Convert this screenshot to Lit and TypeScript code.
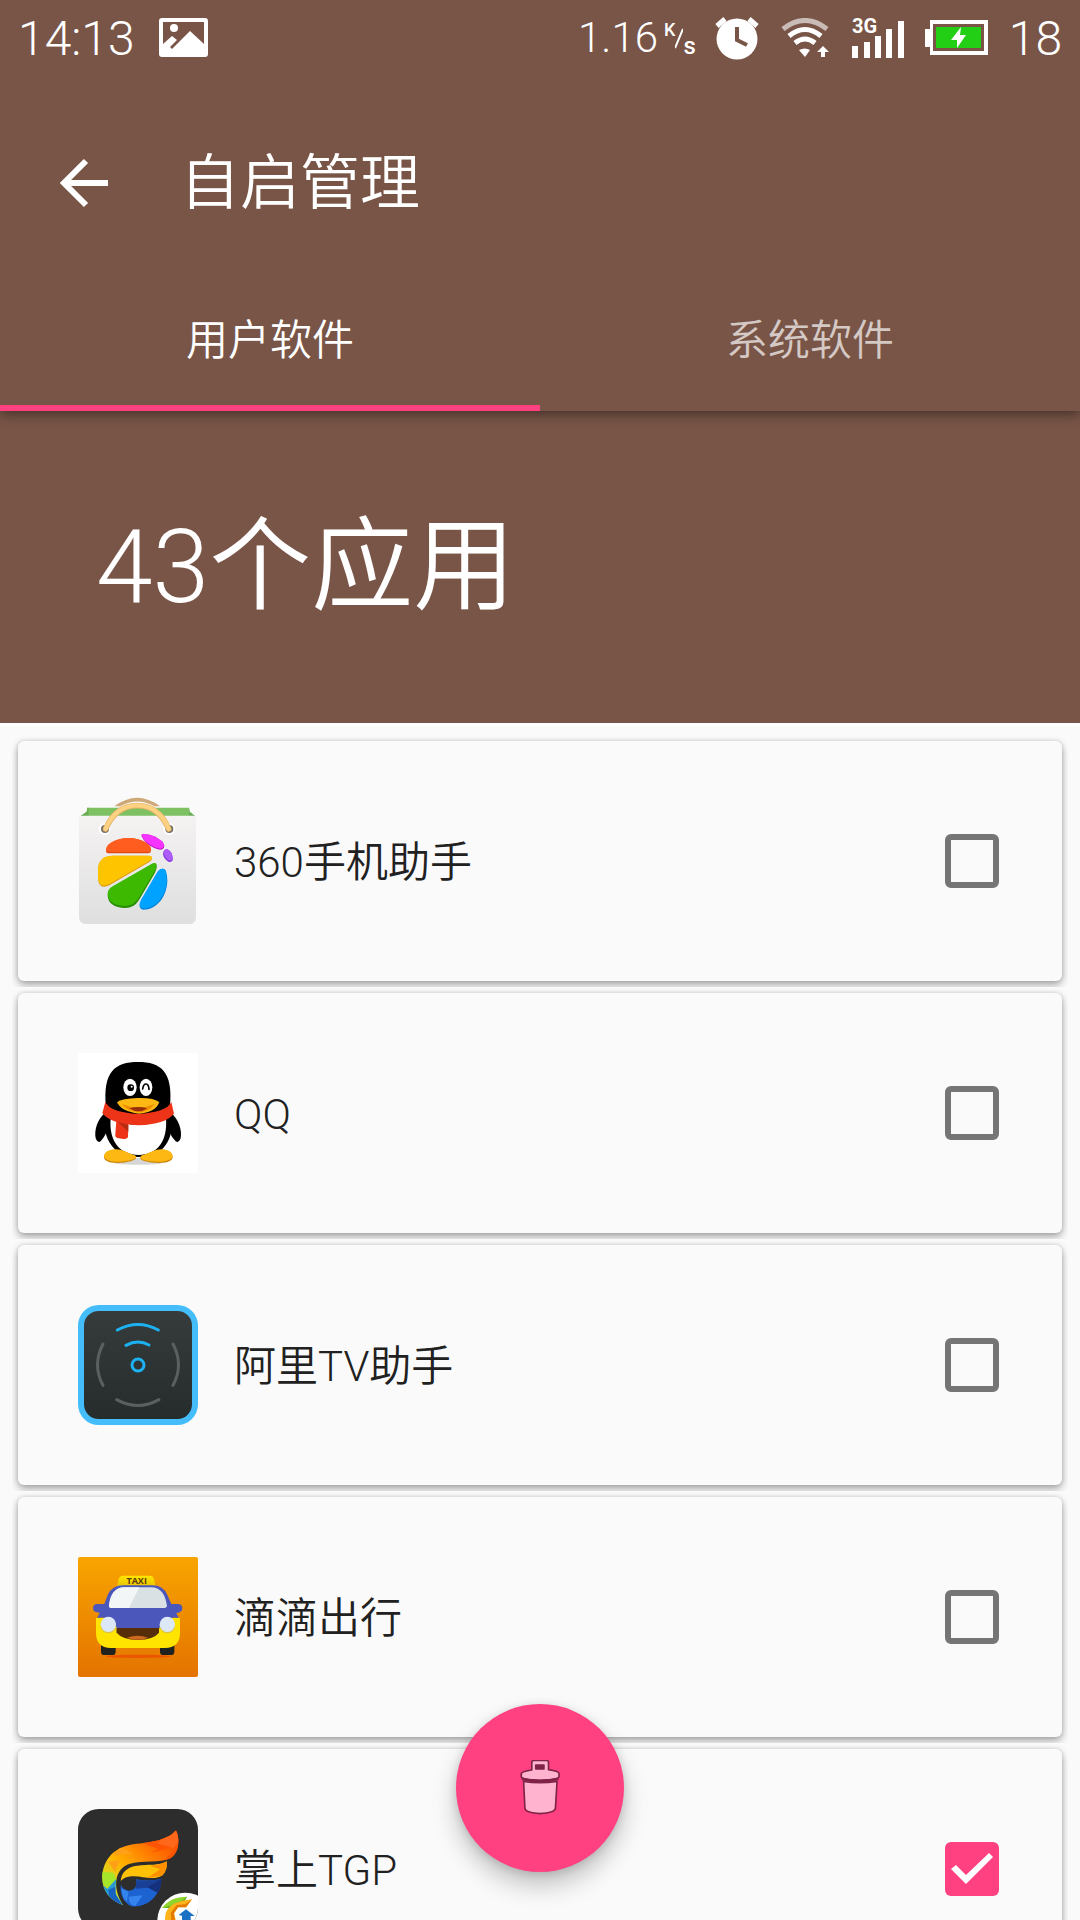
import { LitElement, html, css, svg } from "lit";
import { customElement, property, state } from "lit/decorators.js";
import { classMap } from "lit/directives/class-map.js";

const storeIcon = svg`
<svg viewBox="54 63 360 360" aria-hidden="true">
  <defs><linearGradient id="bag" x1="0" y1="0" x2="0" y2="1">
    <stop offset="0" stop-color="#f5f2f2"/><stop offset="1" stop-color="#dfdfdf"/></linearGradient></defs>
  <path d="M163 79Q232 28 300 79L284 79Q232 50 180 79Z" fill="#cfa877"/>
  <path d="M82 83H387L389 95L405 108H62L80 95Z" fill="#7dc163"/>
  <path d="M82 83L80 95L62 108H86V83ZM387 83V108H405L389 95Z" fill="#6aae55"/>
  <path d="M57 107H408V410Q408 432 386 432H79Q57 432 57 410Z" fill="url(#bag)"/>
  <circle cx="134" cy="147" r="18" fill="#fff"/><circle cx="328" cy="147" r="18" fill="#fff"/>
  <circle cx="135" cy="147" r="12" fill="#77736a"/><circle cx="328" cy="147" r="12" fill="#77736a"/>
  <path d="M137 147C157 100 190 77 232 77S306 100 326 147" fill="none" stroke="#e3b266" stroke-width="17" stroke-linecap="round"/>
  <path d="M137 146C157 99 190 76 232 76S306 99 326 146" fill="none" stroke="#fdd182" stroke-width="13" stroke-linecap="round"/>
  <path d="M138 212C140 190 175 174 206 174S273 191 273 211Q273 220 264 220H148Q138 220 138 212Z" fill="#e04a12"/>
  <path d="M138 208C140 187 175 174 206 174S273 189 273 207Q273 216 264 216H148Q138 216 138 208Z" fill="#ff5d1f"/>
  <path d="M114 300V268C115 240 132 227 160 227H266Q276 227 276 235Q276 241 268 246L148 316Q120 330 114 300Z" fill="#dc9a0c"/>
  <path d="M114 296V266C115 240 132 227 160 227H266Q276 227 276 233Q276 238 268 243L148 312Q120 326 114 296Z" fill="#ffc400"/>
  <path d="M143 347Q143 331 158 322L276 252Q291 244 290 262Q289 271 284 280L237 360Q222 384 196 384Q145 381 143 347Z" fill="#268c00"/>
  <path d="M143 341Q143 328 158 319L276 251Q291 244 289 258Q288 267 284 274L236 354Q222 377 196 378Q145 376 143 341Z" fill="#3cb900"/>
  <path d="M239 379Q238 372 244 361L292 277Q300 264 312 267Q321 270 322 302C321 350 290 389 250 389Q240 388 239 379Z" fill="#0083dc"/>
  <path d="M239 376Q238 369 244 358L292 277Q300 264 312 267Q320 270 320 302C319 346 288 385 250 385Q240 385 239 376Z" fill="#00a2ff"/>
  <path d="M245 169Q242 161 254 162Q284 165 306 184Q318 199 309 207Q301 212 284 205Q253 190 245 169Z" fill="#cb1dd0"/>
  <path d="M245 166Q244 160 254 162Q284 165 306 184Q316 196 308 203Q301 208 284 201Q254 187 245 166Z" fill="#f535ff"/>
  <path d="M309 222Q310 207 322 208Q336 213 339 237Q336 249 325 245Q310 236 309 222Z" fill="#8a3fe0"/>
  <path d="M312 219Q313 207 322 208Q335 213 338 235Q335 244 327 241Q313 232 312 219Z" fill="#ae5cf8"/>
</svg>`;

const penguinIcon = svg`
<svg viewBox="54 54 360 360" aria-hidden="true">
  <rect x="54" y="54" width="360" height="360" rx="6" fill="#fff"/>
  <ellipse cx="235" cy="379" rx="90" ry="10" fill="#d6d6d6"/>
  <path d="M137 232C112 252 102 286 107 310Q113 325 122 319Q132 309 140 290ZM331 232C356 252 367 286 362 310Q356 325 347 319Q336 309 328 290Z" fill="#000"/>
  <path d="M138 215C128 110 165 81 234 81S340 110 330 215C350 300 320 366 236 366S120 300 138 215Z" fill="#000"/>
  <path d="M152 250Q235 290 318 250C323 320 292 360 236 360S146 320 152 250Z" fill="#fff"/>
  <path d="M132 366C134 344 168 340 190 347Q210 356 227 363Q232 373 214 378C180 388 132 386 132 366ZM338 366C336 344 304 340 282 347Q262 356 243 363Q236 373 252 378C288 388 338 386 338 366Z" fill="#cf8500"/>
  <path d="M132 362C136 342 168 340 190 347Q210 356 227 362Q230 371 214 375C180 384 134 382 132 362ZM338 362C334 342 304 340 282 347Q262 356 243 362Q238 371 252 375C288 384 336 382 338 362Z" fill="#fdb813"/>
  <path d="M136 201Q150 232 234 237Q320 232 334 201L342 236Q316 268 234 271Q150 266 127 234Z" fill="#ee3418"/>
  <path d="M169 258L205 268L204 306Q202 313 190 312L172 309Q164 306 166 298Z" fill="#ee3418"/>
  <path d="M174 261L205 269V290Z" fill="#b52c12"/>
  <ellipse cx="210" cy="157" rx="20" ry="26" fill="#fff"/><ellipse cx="258" cy="157" rx="19" ry="26" fill="#fff"/>
  <circle cx="212" cy="158" r="10" fill="#000"/><circle cx="215" cy="155" r="3" fill="#fff"/>
  <path d="M248 162Q250 147 258 147T267 163" fill="none" stroke="#000" stroke-width="5" stroke-linecap="round"/>
  <path d="M171 202Q185 190 234 189T298 202Q286 233 236 236Q184 230 171 202Z" fill="#fdb813"/>
  <path d="M186 207Q234 228 284 207Q266 231 236 232Q203 230 186 207Z" fill="#f08c00"/>
  <path d="M208 220Q235 212 262 220Q236 238 208 220Z" fill="#96300d"/>
</svg>`;

const radarIcon = svg`
<svg viewBox="54 45 360 360" aria-hidden="true">
  <defs><linearGradient id="panel" x1="0" y1="0" x2="0" y2="1">
    <stop offset="0" stop-color="#363c3c"/><stop offset="1" stop-color="#262b2b"/></linearGradient></defs>
  <rect x="54" y="45" width="360" height="360" rx="62" fill="#45bdfa"/>
  <rect x="72" y="63" width="324" height="324" rx="44" fill="url(#panel)"/>
  <g fill="none" stroke-width="9" stroke-linecap="round">
    <g stroke="#1cb2f2"><path d="M172 120Q234 87 295 120M198 166Q234 147 267 165"/><circle cx="234" cy="225" r="18"/></g>
    <path d="M170 329Q234 364 297 329M129 162Q96 225 129 286M339 162Q372 225 339 286" stroke="#5a5f5f"/>
  </g>
</svg>`;

const taxiIcon = svg`
<svg viewBox="54 51 360 360" aria-hidden="true">
  <defs>
    <linearGradient id="road" x1="0" y1="0" x2="0" y2="1"><stop offset="0" stop-color="#f8a500"/><stop offset="1" stop-color="#e47300"/></linearGradient>
    <linearGradient id="sign" x1="0" y1="0" x2="0" y2="1"><stop offset="0" stop-color="#ffe500"/><stop offset="1" stop-color="#e8c300"/></linearGradient>
  </defs>
  <rect x="54" y="51" width="360" height="360" rx="6" fill="url(#road)"/>
  <ellipse cx="235" cy="349" rx="98" ry="5" fill="#ec5500"/>
  <rect x="123" y="300" width="44" height="45" rx="10" fill="#20221f"/><rect x="300" y="300" width="43" height="45" rx="10" fill="#20221f"/>
  <path d="M171 140L176 117Q179 107 189 107H270Q280 107 282 117L287 140Z" fill="url(#sign)"/>
  <text class="sign" x="230" y="131" text-anchor="middle">TAXI</text>
  <path d="M108 234H360V280Q359 324 315 324H152Q109 324 108 280Z" fill="#ffe400"/>
  <path d="M112 234L119 218Q99 218 99 205Q99 192 113 192H133L143 165Q156 136 190 136H277Q310 136 322 165L334 192H353Q367 192 367 205Q367 218 349 219L356 234Q320 225 297 266V278H170V262Q145 225 112 234Z" fill="#4b57bb"/>
  <path d="M147 197C151 164 164 142 194 142H272C303 142 316 164 321 197Q320 204 311 204H157Q146 204 147 197Z" fill="#d9e1e4"/>
  <path d="M147 197C151 164 164 142 194 142H238L207 204H157Q146 204 147 197Z" fill="#f2f6f7"/>
  <path d="M170 278V264H297V278Q280 299 234 300Q187 299 170 278Z" fill="#562e08"/>
  <path d="M201 293Q232 281 264 293Q234 306 201 293Z" fill="#ce6a20"/>
  <circle cx="145" cy="257" r="23" fill="#d8c24a"/><circle cx="322" cy="257" r="23" fill="#d8c24a"/>
  <circle cx="145" cy="253" r="23" fill="#dce8f7"/><circle cx="322" cy="253" r="23" fill="#dce8f7"/>
</svg>`;

const flameIcon = svg`
<svg viewBox="54 87 360 360" aria-hidden="true">
  <defs>
    <linearGradient id="wing" x1="0" y1="1" x2="1" y2="0">
      <stop offset="0" stop-color="#8ed122"/><stop offset=".2" stop-color="#d9dd23"/><stop offset=".4" stop-color="#ffb300"/><stop offset=".65" stop-color="#ff7900"/><stop offset="1" stop-color="#f83a00"/></linearGradient>
    <clipPath id="tile"><rect x="54" y="87" width="360" height="360" rx="62"/></clipPath>
    <clipPath id="flame"><path d="M348 151C360 178 359 215 331 235C300 251 250 239 207 252C166 267 154 320 189 375C145 360 123 325 127 283C135 225 174 200 220 193C278 187 328 178 348 151Z"/></clipPath>
  </defs>
  <g clip-path="url(#tile)">
    <rect x="54" y="87" width="360" height="360" fill="#2d2d2d"/>
    <g clip-path="url(#flame)">
      <rect x="120" y="145" width="245" height="235" fill="url(#wing)"/>
      <path d="M240 186L295 207L270 218L350 200L310 245L360 235V145Z" fill="#ff5400"/>
      <path d="M345 150L290 190L340 205L365 175Z" fill="#ff681a"/>
      <path d="M180 200L220 222L160 225ZM145 245L180 240L165 275Z" fill="#ffa018"/>
      <path d="M125 275L160 278L170 300L145 325L128 310Z" fill="#a5e52a"/>
      <path d="M125 313L142 326L168 298L166 340L195 385H120Z" fill="#279ad7"/>
      <path d="M145 330L165 320L168 345L190 380L150 365Z" fill="#1763c2"/>
    </g>
    <path d="M320 244Q324 270 306 287C276 303 246 286 214 289Q195 290 182 303C184 276 203 260 232 257C265 253 298 258 320 244Z" fill="#ffc107"/>
    <path d="M320 244Q324 270 306 287L262 294L300 268L270 257Q300 255 320 244Z" fill="#ff9100"/>
    <path d="M183 312C177 342 193 371 215 379C264 383 303 345 304 296Q270 306 228 298Q234 331 207 332Q186 330 183 312Z" fill="#1d62d1"/>
    <path d="M304 296L262 323L228 326L229 300Q270 306 304 296Z" fill="#1a3f96"/>
    <path d="M262 322L295 340Q304 320 304 296Z" fill="#15307c"/>
    <path d="M185 325L206 336L200 366Q184 350 185 325ZM206 350L248 346L225 379Q205 373 206 350Z" fill="#3584ee"/>
    <circle cx="376" cy="422" r="84" fill="#fff"/>
    <path d="M306 384Q330 350 382 350L350 380Z" fill="#8fd32c"/>
    <path d="M306 384Q350 376 382 350L372 366L338 384Z" fill="#5fae1f"/>
    <path d="M396 358L378 382H354L342 400L350 430H318Q306 390 345 370Q370 360 396 358Z" fill="#ffb31a"/>
    <path d="M396 358L378 382H354L342 400L346 430H335L332 398L350 375L376 373Z" fill="#e47a00"/>
    <path d="M356 405L378 388L404 408H392V430H366V407Z" fill="#1b72c5"/>
  </g>
</svg>`;

interface AppItem {
  name: string;
  icon: unknown;
  checked: boolean;
}

@customElement("status-bar")
class StatusBar extends LitElement {
  static styles = css`
    :host { display: flex; align-items: center; justify-content: space-between; height: 75px; padding: 0 18px; color: #fff; font-weight: 300; }
    .group { display: flex; align-items: center; }
    .clock, .level { padding-top: 2px; font-size: 48px; line-height: 60px; }
    .clock { margin-right: 24px; }
    .speed { font-size: 42px; line-height: 60px; }
    .unit { display: flex; align-items: center; height: 36px; margin: 0 18px 0 6px; font-weight: 500; line-height: 20px; }
    .upper { align-self: flex-start; font-size: 18px; }
    .lower { align-self: flex-end; font-size: 24px; }
    .slash { width: 8px; height: 24px; }
    .picture { width: 50px; height: 40px; }
    .alarm { width: 46px; height: 44px; margin-right: 21px; }
    .wifi { width: 48px; height: 40px; margin-right: 23px; }
    .signal { width: 52px; height: 42px; margin-right: 21px; overflow: visible; }
    .battery { width: 64px; height: 36px; margin-right: 20px; }
    .net { font: 700 20px Roboto, sans-serif; fill: #fff; }
    svg { display: block; fill: #fff; }
  `;

  render() {
    return html`
      <div class="group">
        <span class="clock">14:13</span>
        <svg class="picture" viewBox="0 0 50 40" aria-hidden="true">
          <path fill-rule="evenodd" d="M3 0H46Q49 0 49 3V36Q49 39 46 39H3Q0 39 0 36V3Q0 0 3 0ZM4 4V26L13 18L18 22L11 29L13 31L31 13L45 26V4Z"/>
          <circle cx="15" cy="10" r="4"/>
        </svg>
      </div>
      <div class="group">
        <span class="speed">1.16</span>
        <span class="unit">
          <span class="upper">K</span>
          <svg class="slash" viewBox="0 0 8 24" aria-hidden="true"><path d="M0 22L8 3" stroke="#fff" stroke-width="2"/></svg>
          <span class="lower">s</span>
        </span>
        <svg class="alarm" viewBox="0 0 46 44" aria-hidden="true">
          <circle cx="23" cy="23" r="20.5"/>
          <path d="M3 10L11 3M43 10L35 3" stroke="#fff" stroke-width="5"/>
          <path d="M23 11V24L33 29" fill="none" stroke="#795548" stroke-width="4"/>
        </svg>
        <svg class="wifi" viewBox="0 0 48 40" aria-hidden="true">
          <g fill="none" stroke="#fff" stroke-width="5">
            <path d="M2 11Q24 -6 46 11" opacity=".6"/><path d="M8 18Q24 5 40 18M14 25Q24 17 34 25"/>
          </g>
          <path d="M18 32Q24 29 29 32L24 39Z"/><path d="M42 28L48 34H44V39H40V34H36Z"/>
        </svg>
        <svg class="signal" viewBox="0 0 52 42" aria-hidden="true">
          <text class="net" x="0" y="16">3G</text>
          <path d="M0 29H6V41H0ZM12 25H18V41H12ZM23 19H29V41H23ZM34 12H40V41H34ZM46 4H52V41H46Z"/>
        </svg>
        <svg class="battery" viewBox="0 0 64 36" aria-hidden="true">
          <path d="M5 0H63V35H5V27H0V9H5Z"/><path d="M8 4H59V31H8Z" fill="#795548"/><path d="M11 7H56V28H11Z" fill="#22cf14"/>
          <path d="M36 7L26 20H32V28L41 15H35Z"/>
        </svg>
        <span class="level">18</span>
      </div>
    `;
  }
}

@customElement("app-card")
class AppCard extends LitElement {
  @property({ attribute: false }) item!: AppItem;

  static styles = css`
    :host { display: block; padding: 6px; overflow: hidden; }
    .card {
      display: flex; align-items: center; box-sizing: border-box; height: 240px; padding: 0 63px 0 60px;
      background: #fafafa; border-radius: 6px; color: #212121;
      box-shadow: 0 4px 8px rgba(0, 0, 0, 0.32), 0 0 4px rgba(0, 0, 0, 0.14);
    }
    .icon { width: 120px; height: 120px; margin-right: 36px; }
    .icon svg { display: block; width: 120px; height: 120px; overflow: visible; }
    .name { flex: 1; padding-top: 4px; font-size: 42px; line-height: 60px; }
    .box { appearance: none; box-sizing: border-box; width: 54px; height: 54px; margin: 0; border: 6px solid #757575; border-radius: 6px; }
    .box:checked { border: 0; background: #ff4081; }
    .box:checked::after {
      content: ""; display: block; width: 54px; height: 54px; background: #fff;
      clip-path: polygon(6px 27px, 11px 23px, 21px 33px, 44px 11px, 48px 15px, 21px 42px);
    }
    .sign { font: 700 27px "Open Sans", sans-serif; fill: #5d3c08; }
  `;

  render() {
    return html`
      <label class="card">
        <span class="icon">${this.item.icon}</span>
        <span class="name">${this.item.name}</span>
        <input class="box" type="checkbox" .checked=${this.item.checked} />
      </label>
    `;
  }
}

@customElement("app-root")
class AppRoot extends LitElement {
  @state() private tab = 0;

  private tabs = ["用户软件", "系统软件"];
  private items: AppItem[] = [
    { name: "360手机助手", icon: storeIcon, checked: false },
    { name: "QQ", icon: penguinIcon, checked: false },
    { name: "阿里TV助手", icon: radarIcon, checked: false },
    { name: "滴滴出行", icon: taxiIcon, checked: false },
    { name: "掌上TGP", icon: flameIcon, checked: true },
  ];

  static styles = css`
    :host {
      position: relative; display: flex; flex-direction: column; height: 100vh; overflow: hidden;
      background: #fafafa; font-family: Roboto, "Noto Sans CJK SC", sans-serif; font-weight: 350;
    }
    button { border: 0; margin: 0; padding: 0; background: none; font: inherit; color: inherit; }
    .header { position: relative; flex: none; background: #795548; color: #fff; box-shadow: 0 3px 12px rgba(0, 0, 0, 0.45); }
    .toolbar { display: flex; align-items: center; height: 168px; margin-top: 24px; padding: 0 48px; gap: 60px; }
    .back { width: 72px; height: 72px; }
    .back svg { display: block; width: 72px; height: 72px; }
    .title { margin: 0; padding-top: 2px; font-size: 60px; line-height: 84px; font-weight: 350; }
    .tabs { display: flex; height: 144px; }
    .tab { flex: 1; box-sizing: border-box; padding-top: 10px; border-bottom: 6px solid transparent; font-size: 42px; line-height: 60px; color: rgba(255, 255, 255, 0.7); }
    .tab.active { color: #fff; border-bottom-color: #ff4081; }
    .banner { flex: none; display: flex; align-items: center; height: 312px; padding: 0 96px; background: #795548; color: #fff; font-size: 102px; line-height: 144px; }
    .list { flex: 1; min-height: 0; margin: 0; padding: 9px 12px; border-top: 3px solid #fff; list-style: none; overflow: auto; scrollbar-width: none; }
    .fab {
      position: absolute; bottom: 48px; left: calc(50% - 84px); width: 168px; height: 168px; border-radius: 50%;
      background: #ff4081; box-shadow: 0 14px 24px rgba(0, 0, 0, 0.22), 0 2px 10px rgba(0, 0, 0, 0.14);
    }
    .fab svg { display: block; width: 40px; height: 56px; margin: 0 auto; }
  `;

  render() {
    return html`
      <header class="header">
        <status-bar></status-bar>
        <div class="toolbar">
          <button class="back" aria-label="返回">
            <svg viewBox="0 0 72 72" aria-hidden="true"><path d="M38 14L16 36L38 58M16 36H60" fill="none" stroke="#fff" stroke-width="6"/></svg>
          </button>
          <h1 class="title">自启管理</h1>
        </div>
        <div class="tabs" role="tablist">
          ${this.tabs.map((label, i) => html`
            <button role="tab" aria-selected=${i === this.tab} class=${classMap({ tab: true, active: i === this.tab })}
              @click=${() => (this.tab = i)}>${label}</button>`)}
        </div>
      </header>
      <div class="banner">43个应用</div>
      <ul class="list">
        ${this.items.map((item) => html`<li><app-card .item=${item}></app-card></li>`)}
      </ul>
      <button class="fab" aria-label="删除">
        <svg viewBox="270 240 122 168" aria-hidden="true">
          <g fill="#ffb3ce" stroke="#7e2347" stroke-width="5" stroke-linejoin="round">
            <path d="M281 304Q331 312 383 304L378 386Q376 399 331 402Q287 399 285 386Z"/>
            <path d="M306 269V246Q306 240 312 240H351Q357 240 357 246V268Q389 273 389 280V290Q384 301 331 301T274 290V280Q276 273 306 269Z"/>
            <path d="M318 254H343V266H318Z" fill="#7e2347"/>
          </g>
          <path d="M276 296Q331 309 387 296" fill="none" stroke="#7e2347" stroke-width="9"/>
        </svg>
      </button>
    `;
  }
}
